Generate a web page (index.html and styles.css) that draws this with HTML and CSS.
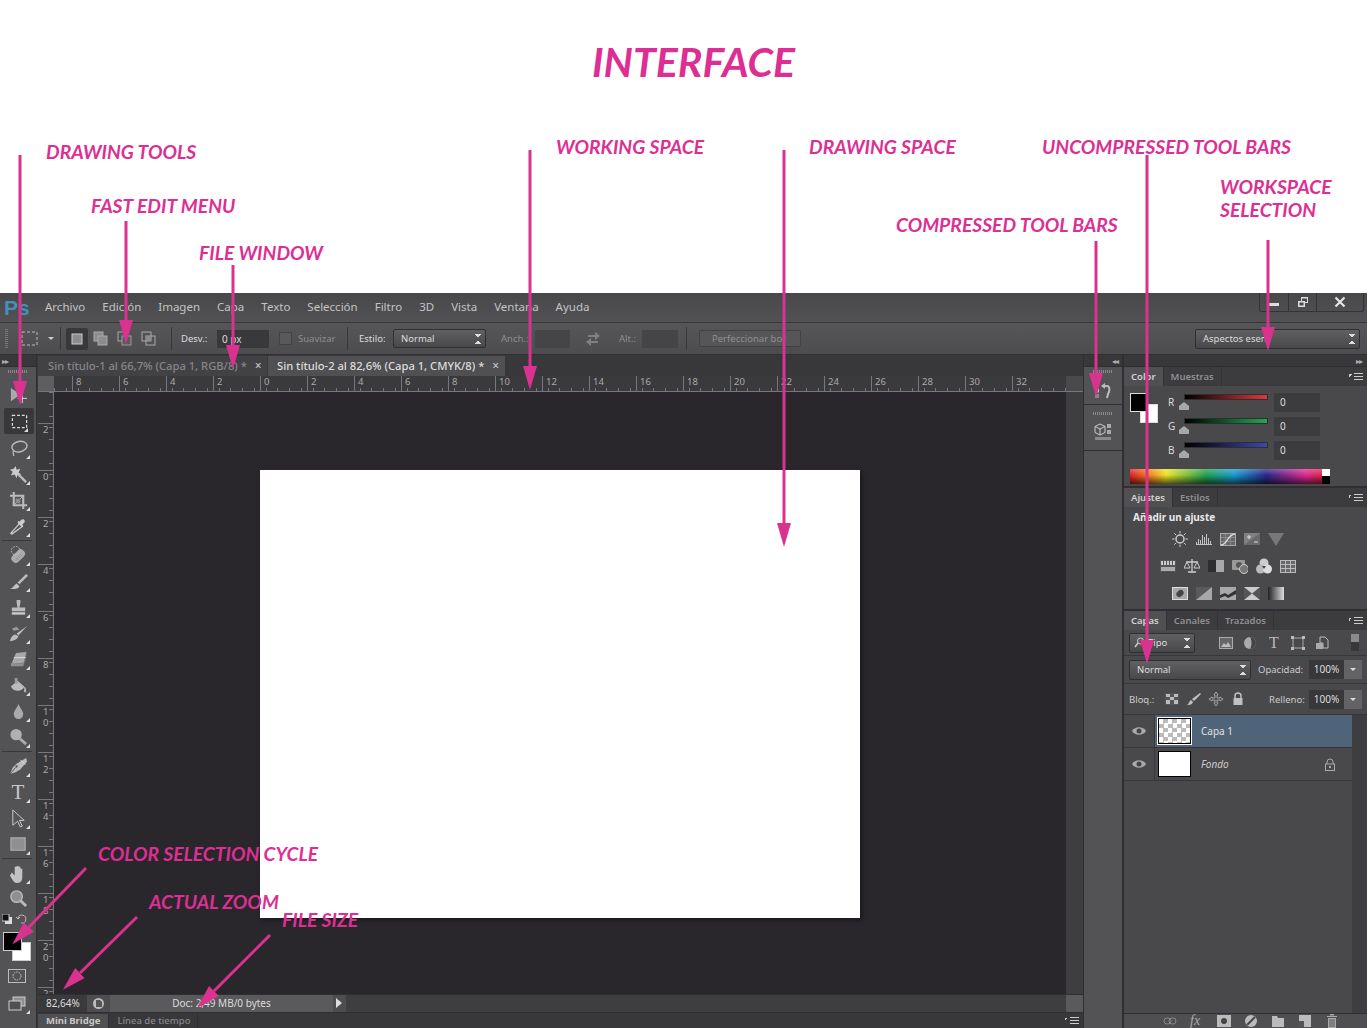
FILE: index.html
```html
<!DOCTYPE html>
<html lang="es">
<head>
  <meta charset="UTF-8">
  <title>Interface</title>
  <link rel="stylesheet" href="styles.css">
</head>
<body>

  <header class="intro">
    <h1>INTERFACE</h1>
  </header>

  <div class="ps">
    <!-- barra de menu -->
    <div class="menubar">
      <span class="logo">Ps</span>
      <nav class="menu">
        <span>Archivo</span><span>Edición</span><span>Imagen</span><span>Capa</span><span>Texto</span><span>Selección</span><span>Filtro</span><span>3D</span><span>Vista</span><span>Ventana</span><span>Ayuda</span>
      </nav>
      <div class="winctl">
        <span class="winbtn win-min"><svg width="12" height="12" viewBox="0 0 12 12"><rect x="1" y="7" width="10" height="3" fill="#ddd"/></svg></span>
        <span class="winbtn win-max"><svg width="12" height="12" viewBox="0 0 12 12"><path d="M4 1h7v6H8v4H1V5h3zM5 2.500V5h3v1h2V2.500zM2.500 6.500v3h4v-3z" fill="#ddd"/></svg></span>
        <span class="winbtn win-close"><svg width="12" height="12" viewBox="0 0 12 12"><path d="M1.500 1.500l9 9M10.500 1.500l-9 9" stroke="#e4e4e4" stroke-width="2.200"/></svg></span>
      </div>
    </div>

    <!-- barra de opciones -->
    <div class="options">
      <span class="grip-v"></span>
      <svg class="opt-marquee" width="17" height="15" viewBox="0 0 17 15"><rect x="1" y="1" width="15" height="13" fill="none" stroke="#bbb" stroke-dasharray="3 2"/></svg>
      <span class="caret"></span>
      <span class="sep sep-a"></span>
      <span class="modebtn active"><svg width="14" height="14" viewBox="0 0 14 14"><rect x="2" y="2" width="10" height="10" fill="#8c8b8e" stroke="#ccc"/></svg></span>
      <span class="modebtn"><svg width="16" height="16" viewBox="0 0 16 16"><rect x="1" y="1" width="9" height="9" fill="#8c8b8e" stroke="#aaa"/><rect x="5" y="5" width="9" height="9" fill="#8c8b8e" stroke="#aaa"/></svg></span>
      <span class="modebtn"><svg width="16" height="16" viewBox="0 0 16 16"><rect x="1" y="1" width="9" height="9" fill="none" stroke="#aaa"/><rect x="5" y="5" width="9" height="9" fill="#5a595c" stroke="#999"/></svg></span>
      <span class="modebtn"><svg width="16" height="16" viewBox="0 0 16 16"><rect x="1" y="1" width="9" height="9" fill="none" stroke="#aaa"/><rect x="5" y="5" width="9" height="9" fill="none" stroke="#aaa"/><rect x="5" y="5" width="5" height="5" fill="#8c8b8e"/></svg></span>
      <span class="sep sep-b"></span>
      <label class="opt-label desv">Desv.:</label>
      <span class="field field-desv">0 px</span>
      <span class="check"></span>
      <span class="opt-label dim suavizar">Suavizar</span>
      <span class="sep sep-c"></span>
      <span class="opt-label estilo">Estilo:</span>
      <span class="select select-estilo">Normal<i class="updown"></i></span>
      <span class="opt-label dim anch">Anch.:</span>
      <span class="field field-small"></span>
      <svg class="swap" width="16" height="14" viewBox="0 0 16 14"><path d="M3 3h7V0l5 4-5 4V5H3zM13 9H6V6l-5 4 5 4v-3h7z" fill="#807f82"/></svg>
      <span class="opt-label dim alt">Alt.:</span>
      <span class="field field-small field-alt"></span>
      <span class="sep sep-d"></span>
      <span class="refine">Perfeccionar bor</span>
      <span class="select select-workspace">Aspectos esen<i class="updown"></i></span>
    </div>

    <div class="main">
      <!-- herramientas -->
      <aside class="tools">
        <div class="strip"><span class="dbl">▸▸</span></div>
        <div class="grip-h tool-grip"></div>
        <div class="tool"><svg viewBox="0 0 20 20"><path d="M2 2l10 7-10 7z" fill="#aaa"/><path d="M14 8v10M9 13h10" stroke="#ddd"/></svg></div>
        <div class="tool selected more"><svg viewBox="0 0 20 20"><rect x="2.500" y="3.500" width="15" height="13" fill="none" stroke="#ddd" stroke-width="1.300" stroke-dasharray="3 2"/></svg></div>
        <div class="tool more"><svg viewBox="0 0 20 20"><ellipse cx="11" cy="8" rx="8" ry="5.500" fill="none" stroke="#bbb" stroke-width="1.500" transform="rotate(-12 11 8)"/><path d="M5 12c-2 2 0 3 0 6" fill="none" stroke="#bbb" stroke-width="1.300"/></svg></div>
        <div class="tool more"><svg viewBox="0 0 20 20"><path d="M9 9l9 9" stroke="#bbb" stroke-width="2.500"/><path d="M7 1l1 4 4-1-2 4 3 2-4 0-1 4-2-4-4 1 2-4-3-2 4-1z" fill="#ccc"/></svg></div>
        <div class="tool more"><svg viewBox="0 0 20 20"><path d="M5 1v14h14M1 5h14v14" fill="none" stroke="#bbb" stroke-width="2.200"/><path d="M5 15L15 5" stroke="#bbb"/><rect x="7" y="8" width="5" height="5" fill="#8c8b8e"/></svg></div>
        <div class="tool more"><svg viewBox="0 0 20 20"><path d="M3 18l-1-1 9-10 3 3z" fill="none" stroke="#ccc" stroke-width="1.400"/><path d="M11 5l2-2c2-2 5 1 3 3l-2 2 1 1-2 1-4-4 1-2z" fill="#ccc"/></svg></div>
        <div class="tool gap-top more"><svg viewBox="0 0 20 20"><rect x="5" y="3" width="9" height="16" rx="4" fill="#aaa" transform="rotate(45 10 11)"/><circle cx="7" cy="5" r="4.500" fill="none" stroke="#ccc" stroke-dasharray="1.500 1.500"/><path d="M8 13l1 1M10 11l1 1M12 9l1 1" stroke="#666"/></svg></div>
        <div class="tool more"><svg viewBox="0 0 20 20"><path d="M18 2l2 2-9 9-2-2z" fill="#bbb"/><path d="M8 12l3 3c-1 3-6 3-10 3 3-1 4-4 7-6z" fill="#c4c4c4"/></svg></div>
        <div class="tool more"><svg viewBox="0 0 20 20"><path d="M8 2h4v3l-1 5h6v4H3v-4h6L8 5z" fill="#bbb"/><rect x="3" y="15" width="14" height="2.500" fill="#ccc"/></svg></div>
        <div class="tool more"><svg viewBox="0 0 20 20"><path d="M19 2L8 10l2 2zM1 18c1-4 3-7 6-7l3 2c-1 3-5 5-9 5z" fill="#bbb"/><path d="M3 5l5-2 3 3-6 1z" fill="#999"/></svg></div>
        <div class="tool more"><svg viewBox="0 0 20 20"><path d="M8 3h11l-4 11H2z" transform="rotate(-6 10 9)" fill="#a8a8a8"/><path d="M5 8h13" stroke="#ddd"/><path d="M2 14h13l4-11-1 4-3 10H2z" fill="#8e8e8e"/></svg></div>
        <div class="tool more"><svg viewBox="0 0 20 20"><path d="M2 11l7-6 7 6c-1 5-11 7-14 0z" fill="#bbb"/><path d="M6 2h3v6H6z" fill="#999"/><path d="M16 11c2 1 2 4 2 6h-2z" fill="#bbb"/></svg></div>
        <div class="tool more"><svg viewBox="0 0 20 20"><path d="M10 2c2 5 5 7 5 11a5 5 0 0 1-10 0c0-4 3-6 5-11z" fill="#aaa"/></svg></div>
        <div class="tool more"><svg viewBox="0 0 20 20"><circle cx="7.500" cy="7" r="6" fill="#b0b0b0"/><path d="M11 11l7 6" stroke="#aaa" stroke-width="3"/></svg></div>
        <div class="tool gap-top more"><svg viewBox="0 0 20 20"><path d="M18 1l1 4-7 8-5 3-6 2 3-7 4-4z" fill="#bbb"/><path d="M1 18l6-7" stroke="#555"/><circle cx="8" cy="10" r="1.200" fill="#555"/><path d="M12 3l5 5" stroke="#ddd"/></svg></div>
        <div class="tool more"><span class="type-t">T</span></div>
        <div class="tool more"><svg viewBox="0 0 20 20"><path d="M4 1l12 11h-5l3 6-2 1-3-6-5 4z" fill="#555" stroke="#ccc"/></svg></div>
        <div class="tool more"><svg viewBox="0 0 20 20"><rect x="2" y="3" width="15" height="13" fill="#8f8e91" stroke="#bbb"/></svg></div>
        <div class="tool gap-top more"><svg viewBox="0 0 20 20"><path d="M3 9l3 3V3h2v6-7h2v7-6h2v7-5h2v9c0 4-2 6-5 6-4 0-5-3-8-8z" fill="#c2c2c2"/></svg></div>
        <div class="tool tool-zoom"><svg viewBox="0 0 20 20"><circle cx="8" cy="8" r="6" fill="#8f8e91" stroke="#bbb" stroke-width="1.500"/><path d="M12 12l6 6" stroke="#bbb" stroke-width="3"/></svg></div>
        <div class="mini-colors">
          <svg width="11" height="11" viewBox="0 0 11 11"><rect x="3" y="3" width="7" height="7" fill="#ddd"/><rect x="0" y="0" width="7" height="7" fill="#111" stroke="#ccc"/></svg>
          <svg width="11" height="11" viewBox="0 0 11 11"><path d="M2 4a4 4 0 1 1 3 5M0 3l2 2 2-2" fill="none" stroke="#bbb"/></svg>
        </div>
        <div class="swatches">
          <span class="bg"></span>
          <span class="fg"></span>
        </div>
        <div class="tool-quick"><svg width="18" height="14" viewBox="0 0 18 14"><rect x=".5" y=".5" width="17" height="13" fill="none" stroke="#bbb"/><circle cx="9" cy="7" r="4" fill="none" stroke="#ccc" stroke-dasharray="1.500 1"/></svg></div>
        <div class="tool-screen more"><svg width="18" height="16" viewBox="0 0 18 16"><rect x="5" y="1" width="12" height="9" fill="#8f8e91" stroke="#ccc"/><rect x="1" y="5" width="12" height="9" fill="#4f4e51" stroke="#ccc"/></svg></div>
      </aside>

      <!-- documento -->
      <section class="doc">
        <div class="tabs">
          <span class="tab">Sin título-1 al 66,7% (Capa 1, RGB/8) *<b>×</b></span>
          <span class="tab on">Sin título-2 al 82,6% (Capa 1, CMYK/8) *<b>×</b></span>
        </div>
        <div class="ruler-top">
          <span class="corner"></span>
          <div class="hticks">
            <span>8</span><span>6</span><span>4</span><span>2</span><span>0</span><span>2</span><span>4</span><span>6</span><span>8</span><span>10</span><span>12</span><span>14</span><span>16</span><span>18</span><span>20</span><span>22</span><span>24</span><span>26</span><span>28</span><span>30</span><span>32</span>
          </div>
          <span class="scroll-cap"></span>
        </div>
        <div class="doc-body">
          <div class="vticks">
            <span>2</span><span>0</span><span>2</span><span>4</span><span>6</span><span>8</span><span>1<br>0</span><span>1<br>2</span><span>1<br>4</span><span>1<br>6</span><span>1<br>8</span><span>2<br>0</span><span>2</span>
          </div>
          <div class="canvas"><div class="page"></div></div>
          <div class="vscroll"></div>
        </div>
        <div class="status">
          <span class="zoomval">82,64%</span>
          <span class="status-ico"><svg width="13" height="13" viewBox="0 0 13 13"><circle cx="6.500" cy="6.500" r="5.500" fill="#bbb"/><path d="M4 3h4l2 2v5H4z" fill="#555"/></svg></span>
          <span class="docinfo">Doc: 2,49 MB/0 bytes</span>
          <span class="status-next"></span>
          <span class="hscroll"></span>
          <span class="scroll-corner"></span>
        </div>
        <div class="bottom-tabs">
          <span class="btab on">Mini Bridge</span>
          <span class="btab">Línea de tiempo</span>
          <span class="panel-menu"></span>
        </div>
      </section>

      <!-- paneles contraidos -->
      <aside class="dock">
        <div class="strip strip-right"><span class="dbl">◂◂</span></div>
        <div class="dock-group">
          <div class="grip-h"></div>
          <svg width="18" height="18" viewBox="0 0 18 18"><rect x="1" y="1" width="4" height="4" fill="#aaa"/><rect x="1.500" y="7" width="3" height="3" fill="none" stroke="#bbb"/><rect x="1" y="12" width="4" height="4" fill="#888"/><path d="M8 4h5c3 0 3 5 1 8l-1 4" fill="none" stroke="#bbb" stroke-width="2"/><path d="M7 4l4-3v6z" fill="#bbb"/></svg>
        </div>
        <div class="dock-group">
          <div class="grip-h"></div>
          <svg width="18" height="18" viewBox="0 0 18 18"><path d="M6 1l5 2.500v6L6 12 1 9.500v-6z" fill="none" stroke="#ccc"/><path d="M1 3.500L6 6l5-2.500M6 6v6" stroke="#ccc" fill="none"/><rect x="13" y="1" width="4" height="4" fill="#aaa"/><rect x="13" y="7" width="4" height="4" fill="#aaa"/><rect x="1" y="14" width="16" height="3" fill="#8a898c"/></svg>
        </div>
      </aside>

      <!-- paneles -->
      <aside class="panels">
        <div class="strip strip-end"><span class="dbl">▸▸</span></div>

        <section class="panel panel-color">
          <div class="ptabs"><span class="ptab on">Color</span><span class="ptab">Muestras</span><span class="panel-menu"></span></div>
          <div class="color-body">
            <div class="color-main">
              <div class="pswatches"><span class="pbg"></span><span class="pfg"></span></div>
              <div class="sliders">
                <div class="slider"><span class="letter">R</span><span class="track"><i class="bar bar-r"></i><i class="thumb"></i></span><span class="value">0</span></div>
                <div class="slider"><span class="letter">G</span><span class="track"><i class="bar bar-g"></i><i class="thumb"></i></span><span class="value">0</span></div>
                <div class="slider"><span class="letter">B</span><span class="track"><i class="bar bar-b"></i><i class="thumb"></i></span><span class="value">0</span></div>
              </div>
            </div>
            <div class="spectrum"><span class="spec-ends"></span></div>
          </div>
        </section>

        <section class="panel panel-adjust">
          <div class="ptabs"><span class="ptab on">Ajustes</span><span class="ptab">Estilos</span><span class="panel-menu"></span></div>
          <div class="adjust-title">Añadir un ajuste</div>
          <div class="adj-row">
            <svg viewBox="0 0 16 16"><circle cx="8" cy="8" r="4" fill="none" stroke="#ccc" stroke-width="1.500"/><path d="M8 0v2.500M8 13.500V16M0 8h2.500M13.500 8H16M2.300 2.300l1.800 1.800M11.900 11.900l1.800 1.800M2.300 13.700l1.800-1.800M11.900 4.100l1.800-1.800" stroke="#ccc"/></svg>
            <svg viewBox="0 0 16 16"><path d="M.5 14v-3M2.500 14V8M4.500 14V9M6.500 14V4M8.500 14V6M10.500 14V3M12.500 14V7M14.500 14v-4M0 13.500h16" stroke="#c4c4c4" fill="none"/></svg>
            <svg viewBox="0 0 16 16"><rect x=".5" y="2.500" width="15" height="12" fill="#68676a" stroke="#aaa"/><path d="M5.500 3v11M10.500 3v11M1 6.500h14M1 10.500h14" stroke="#888"/><path d="M1 14c6 0 7-11 14-11" fill="none" stroke="#ddd" stroke-width="1.300"/></svg>
            <svg viewBox="0 0 16 16"><rect y="2" width="16" height="12" fill="#807f82"/><path d="M0 14L16 2v12z" fill="#69686b"/><path d="M3 6h4M5 4v4M10 11h4" stroke="#ddd"/></svg>
            <svg viewBox="0 0 16 16"><path d="M0 2h16L8 15z" fill="#78777a"/></svg>
          </div>
          <div class="adj-row">
            <svg viewBox="0 0 16 16"><rect y="2" width="16" height="12" fill="#555"/><path d="M1 3h2v4H1zM4 3h2v4H4zM7 3h2v4H7zM10 3h2v4h-2zM13 3h2v4h-2z" fill="#ccc"/><rect x="1" y="9" width="14" height="4" fill="#aaa"/></svg>
            <svg viewBox="0 0 16 16"><path d="M8 1v13M4 14h8M2 4h12" stroke="#ccc" stroke-width="1.300"/><path d="M0 10h6l-3-6zM10 10h6l-3-6z" fill="none" stroke="#ccc"/></svg>
            <svg viewBox="0 0 16 16"><rect y="2" width="8" height="12" fill="#2e2d30"/><rect x="8" y="2" width="8" height="12" fill="#a8a8a8"/></svg>
            <svg viewBox="0 0 16 16"><rect y="2" width="13" height="10" rx="1" fill="#999"/><circle cx="7" cy="7" r="3" fill="#555"/><circle cx="12" cy="11" r="4.500" fill="#777" stroke="#ccc"/></svg>
            <svg viewBox="0 0 16 16"><circle cx="8" cy="5" r="4.500" fill="#ccc"/><circle cx="4.500" cy="11" r="4.500" fill="#bbb"/><circle cx="11.500" cy="11" r="4.500" fill="#ddd"/><path d="M6 8h4l-2 3z" fill="#444"/></svg>
            <svg viewBox="0 0 16 16"><rect x=".5" y="2.500" width="15" height="12" fill="#68676a" stroke="#bbb"/><path d="M5.500 3v11M10.500 3v11M1 6.500h14M1 10.500h14" stroke="#bbb"/></svg>
          </div>
          <div class="adj-row">
            <svg viewBox="0 0 16 16"><rect x=".5" y="2.500" width="15" height="12" fill="#a8a8a8" stroke="#ddd"/><ellipse cx="8" cy="8.500" rx="4" ry="3" fill="#444" transform="rotate(-40 8 8.500)"/></svg>
            <svg viewBox="0 0 16 16"><rect y="2" width="16" height="13" fill="#5a595c"/><path d="M0 15L16 2v13z" fill="#a8a8a8"/></svg>
            <svg viewBox="0 0 16 16"><rect y="2" width="16" height="13" fill="#a8a8a8"/><path d="M0 10l5-2 3 2 8-5v4l-8 4-3-2-5 2z" fill="#333"/></svg>
            <svg viewBox="0 0 16 16"><rect y="2" width="16" height="13" fill="#ccc"/><path d="M0 2l8 6.500L0 15zM16 2L8 8.500 16 15z" fill="#555"/></svg>
            <svg viewBox="0 0 16 16"><defs><linearGradient id="gradmap"><stop offset="0" stop-color="#222"/><stop offset="1" stop-color="#ddd"/></linearGradient></defs><rect y="2" width="16" height="13" fill="url(#gradmap)"/></svg>
          </div>
        </section>

        <section class="panel panel-layers">
          <div class="ptabs"><span class="ptab on">Capas</span><span class="ptab">Canales</span><span class="ptab">Trazados</span><span class="panel-menu"></span></div>
          <div class="lrow lrow-filter">
            <span class="select select-kind"><svg width="11" height="11" viewBox="0 0 11 11"><circle cx="6.500" cy="4" r="3" fill="none" stroke="#ccc"/><path d="M4 6l-3 4" stroke="#ccc" stroke-width="1.500"/></svg>Tipo<i class="updown"></i></span>
            <div class="filters">
              <svg viewBox="0 0 14 14"><rect x=".5" y="1.500" width="13" height="11" fill="#666" stroke="#aaa"/><path d="M2 11l3-4 2 2 2-3 3 5z" fill="#bbb"/></svg>
              <svg viewBox="0 0 14 14"><circle cx="7" cy="7" r="6" fill="#aaa"/><path d="M7 1a6 6 0 0 1 0 12c2-3 2-9 0-12z" fill="#444"/></svg>
              <span class="filter-t">T</span>
              <svg viewBox="0 0 14 14"><rect x="2" y="2" width="10" height="10" fill="none" stroke="#aaa"/><path d="M0 0h3v3H0zM11 0h3v3h-3zM0 11h3v3H0zM11 11h3v3h-3z" fill="#bbb"/></svg>
              <svg viewBox="0 0 14 14"><path d="M5 1h5l3 3v8H8V7H5z" fill="none" stroke="#bbb"/><rect x="1" y="7" width="7" height="6" fill="#aaa"/></svg>
            </div>
            <span class="filter-toggle"></span>
          </div>
          <div class="lrow lrow-blend">
            <span class="select select-blend">Normal<i class="updown"></i></span>
            <span class="lab">Opacidad:</span>
            <span class="pct">100%</span><span class="pct-btn"></span>
          </div>
          <div class="lrow lrow-lock">
            <span class="lab lab-bloq">Bloq.:</span>
            <span class="locks">
              <svg viewBox="0 0 14 14"><path d="M0 1h14v12H0z" fill="#555"/><path d="M1 2h4v3H1zM9 2h4v3H9zM5 5h4v3H5zM1 8h4v4H1zM9 8h4v4H9z" fill="#bbb"/></svg>
              <svg viewBox="0 0 14 14"><path d="M13 1l1 1-7 7-2-2zM4 8l2 2c-1 3-4 3-6 3 2-1 2-4 4-5z" fill="#c0c0c0"/></svg>
              <svg viewBox="0 0 14 14"><path d="M7 0l2 3H8v3h3V5l3 2-3 2V8H8v3h1l-2 3-2-3h1V8H3v1L0 7l3-2v1h3V3H5z" fill="none" stroke="#bbb" stroke-width=".8"/></svg>
              <svg viewBox="0 0 14 14"><path d="M4 6V4a3 3 0 0 1 6 0v2" fill="none" stroke="#c0c0c0" stroke-width="1.500"/><rect x="2.500" y="6" width="9" height="7" fill="#c0c0c0"/></svg>
            </span>
            <span class="lab lab-fill">Relleno:</span>
            <span class="pct">100%</span><span class="pct-btn"></span>
          </div>
          <div class="layers">
            <div class="layer-list">
              <div class="layer on">
                <span class="eye"><svg width="14" height="10" viewBox="0 0 14 10"><path d="M0 5c3-5 11-5 14 0-3 5-11 5-14 0z" fill="#aaa"/><circle cx="7" cy="5" r="2.500" fill="#444"/></svg></span>
                <span class="thumbnail checker"></span>
                <span class="lname">Capa 1</span>
              </div>
              <div class="layer">
                <span class="eye"><svg width="14" height="10" viewBox="0 0 14 10"><path d="M0 5c3-5 11-5 14 0-3 5-11 5-14 0z" fill="#aaa"/><circle cx="7" cy="5" r="2.500" fill="#444"/></svg></span>
                <span class="thumbnail white"></span>
                <span class="lname fondo">Fondo</span>
                <svg class="layer-lock" width="12" height="13" viewBox="0 0 12 13"><path d="M3 6V4a3 3 0 0 1 6 0v2" fill="none" stroke="#aaa"/><rect x="1.500" y="6" width="9" height="6.500" fill="none" stroke="#aaa"/><rect x="5" y="8" width="2" height="2" fill="#aaa"/></svg>
              </div>
            </div>
            <div class="layers-scroll"></div>
          </div>
          <div class="layers-foot">
            <svg viewBox="0 0 14 14"><rect x="1" y="4" width="7" height="6" rx="3" fill="none" stroke="#888"/><rect x="6" y="4" width="7" height="6" rx="3" fill="none" stroke="#888"/></svg>
            <span class="fx">fx</span>
            <svg viewBox="0 0 14 14"><rect y="1" width="14" height="12" fill="#bbb"/><circle cx="7" cy="7" r="3" fill="#444"/></svg>
            <svg viewBox="0 0 14 14"><circle cx="7" cy="7" r="6" fill="#bbb"/><path d="M3 11L11 3" stroke="#444" stroke-width="2"/></svg>
            <svg viewBox="0 0 14 14"><path d="M1 2h5l1 2h6v9H1z" fill="#bbb"/></svg>
            <svg viewBox="0 0 14 14"><path d="M1 1h12v12H1z" fill="#bbb"/><path d="M1 7h5v6H1z" fill="#555"/></svg>
            <svg viewBox="0 0 14 14"><path d="M3 4h8v10H3zM2 2h10v1H2zM5 0h4v1.500H5z" fill="#aaa"/><path d="M5 5v8M7 5v8M9 5v8" stroke="#555"/></svg>
          </div>
        </section>
      </aside>
    </div>
  </div>

  <!-- anotaciones -->
  <svg class="arrows" width="1370" height="1028" viewBox="0 0 1370 1028">
    <defs>
      <marker id="head" markerUnits="userSpaceOnUse" markerWidth="26" markerHeight="16" refX="0" refY="8" orient="auto">
        <path d="M0 1l24 7-24 7z" fill="#d9328f"/>
      </marker>
    </defs>
    <g stroke="#d9328f" stroke-width="3">
      <line x1="20" y1="155" x2="20" y2="381" marker-end="url(#head)"/>
      <line x1="126" y1="221" x2="126" y2="320" marker-end="url(#head)"/>
      <line x1="233" y1="265" x2="233" y2="345" marker-end="url(#head)"/>
      <line x1="530" y1="150" x2="530" y2="366" marker-end="url(#head)"/>
      <line x1="784" y1="150" x2="784" y2="523" marker-end="url(#head)"/>
      <line x1="1096" y1="241" x2="1096" y2="373" marker-end="url(#head)"/>
      <line x1="1147" y1="155" x2="1147" y2="640" marker-end="url(#head)"/>
      <line x1="1268" y1="240" x2="1268" y2="327" marker-end="url(#head)"/>
      <line x1="86" y1="868" x2="29" y2="927" marker-end="url(#head)"/>
      <line x1="137" y1="917" x2="80" y2="973" marker-end="url(#head)"/>
      <line x1="270" y1="935" x2="214" y2="991" marker-end="url(#head)"/>
    </g>
  </svg>
  <span class="note n-drawing">DRAWING TOOLS</span>
  <span class="note n-fast">FAST EDIT MENU</span>
  <span class="note n-file">FILE WINDOW</span>
  <span class="note n-working">WORKING SPACE</span>
  <span class="note n-space">DRAWING SPACE</span>
  <span class="note n-uncompressed">UNCOMPRESSED TOOL BARS</span>
  <span class="note n-workspace">WORKSPACE<br>SELECTION</span>
  <span class="note n-compressed">COMPRESSED TOOL BARS</span>
  <span class="note n-cycle">COLOR SELECTION CYCLE</span>
  <span class="note n-zoom">ACTUAL ZOOM</span>
  <span class="note n-size">FILE SIZE</span>

</body>
</html>
```

FILE: styles.css
```css
* {
  box-sizing: border-box;
}

html, body {
  margin: 0;
  padding: 0;
}

body {
  position: relative;
  width: 1370px;
  height: 1028px;
  overflow: hidden;
  background-color: #fff;
  font-family: "Noto Sans", "Liberation Sans", sans-serif;
  font-size: 10px;
  color: #c8c8c8;
}

.intro {
  height: 293px;
  padding-top: 37px;
  padding-left: 17px;
  text-align: center;
}

h1 {
  margin: 0;
  font-family: Lato, sans-serif;
  font-style: italic;
  font-weight: 700;
  font-size: 41px;
  line-height: 50px;
  color: #dd2f93;
}

/* anotaciones */
.arrows {
  position: absolute;
  left: 0;
  top: 0;
  pointer-events: none;
}

.note {
  position: absolute;
  font-family: Lato, sans-serif;
  font-style: italic;
  font-weight: 700;
  font-size: 19.300px;
  line-height: 23px;
  color: #dd2f93;
  white-space: nowrap;
}

.n-drawing { left: 46px; top: 140px; }
.n-fast { left: 91px; top: 194px; }
.n-file { left: 199px; top: 241px; }
.n-working { left: 556px; top: 135px; }
.n-space { left: 809px; top: 135px; }
.n-uncompressed { left: 1042px; top: 135px; }
.n-workspace { left: 1220px; top: 175px; }
.n-compressed { left: 896px; top: 213px; }
.n-cycle { left: 98px; top: 842px; }
.n-zoom { left: 149px; top: 890px; }
.n-size { left: 282px; top: 908px; }

/* ventana */
.ps {
  width: 1367px;
  height: 735px;
  display: flex;
  flex-direction: column;
  background-color: #4a494c;
}

.menubar {
  height: 30px;
  flex: none;
  display: flex;
  background: linear-gradient(#48474a, #525154);
  border-bottom: 1px solid #37363a;
}

.logo {
  width: 45px;
  padding: 2px 0 0 4px;
  font-family: "Liberation Sans", sans-serif;
  font-weight: 700;
  font-size: 21px;
  line-height: 26px;
  color: #4490bc;
}

.menu {
  display: flex;
  gap: 17px;
  align-items: center;
  padding-bottom: 2px;
  font-size: 11.500px;
  color: #c4c4c4;
}

.winctl {
  margin-left: auto;
  margin-right: 3px;
  height: 19px;
  display: flex;
  border: 1px solid #333236;
  border-top: 0;
  border-radius: 0 0 3px 3px;
}

.winbtn {
  display: flex;
  align-items: center;
  justify-content: center;
  border-left: 1px solid #333236;
}

.win-min { width: 28px; border-left: 0; }
.win-max { width: 28px; }
.win-close { width: 47px; }

.options {
  height: 32px;
  flex: none;
  display: flex;
  align-items: center;
  background: linear-gradient(#565558, #4d4c4f);
  border-bottom: 1px solid #2f2e32;
  font-size: 9.500px;
}

.grip-v {
  width: 3px;
  height: 20px;
  margin-left: 5px;
  background: repeating-linear-gradient(#77767a 0 1px, transparent 1px 2px);
}

.opt-marquee { margin-left: 13px; }

.caret {
  width: 0;
  height: 0;
  margin-left: 10px;
  border: 3px solid transparent;
  border-top: 3px solid #ccc;
  border-bottom: 0;
}

.sep {
  width: 1px;
  height: 23px;
  background-color: #38373b;
}

.sep-a { margin: 0 5px 0 6px; }
.sep-b { margin: 0 9px 0 10px; }
.sep-c { margin: 0 11px 0 12px; }
.sep-d { margin: 0 12px 0 8px; }

.modebtn {
  width: 24px;
  height: 22px;
  display: flex;
  align-items: center;
  justify-content: center;
}

.modebtn.active {
  width: 22px;
  margin-right: 1px;
  background-color: #38373a;
  border-radius: 2px;
}

.opt-label {
  color: #ddd;
  white-space: nowrap;
}

.opt-label.dim { color: #8f8e91; }

.desv { width: 36px; }

.field {
  height: 18px;
  display: flex;
  align-items: center;
  padding-left: 5px;
  background-color: #39383b;
  font-size: 10px;
  color: #ddd;
}

.field-desv { width: 52px; }

.field-small {
  width: 35px;
  background-color: #454447;
}

.field-alt { width: 36px; }

.check {
  width: 13px;
  height: 13px;
  margin: 0 6px 0 10px;
  background-color: #59585b;
  border: 1px solid #424145;
}

.suavizar { width: 37px; }
.estilo { width: 34px; }

.select {
  position: relative;
  height: 19px;
  display: flex;
  align-items: center;
  gap: 3px;
  padding-left: 7px;
  background: linear-gradient(#605f62, #484749);
  border: 1px solid #2f2e31;
  border-radius: 2px;
  font-size: 9.500px;
  color: #ddd;
  white-space: nowrap;
  overflow: hidden;
}

.updown {
  position: absolute;
  right: 4px;
  top: 4px;
  width: 6px;
  height: 10px;
  background:
    linear-gradient(45deg, transparent 50%, #ddd 50%) 0 0 / 3px 4px no-repeat,
    linear-gradient(-45deg, transparent 50%, #ddd 50%) 3px 0 / 3px 4px no-repeat,
    linear-gradient(135deg, transparent 50%, #ddd 50%) 0 6px / 3px 4px no-repeat,
    linear-gradient(-135deg, transparent 50%, #ddd 50%) 3px 6px / 3px 4px no-repeat;
}

.select-estilo { width: 93px; }
.anch { width: 34px; margin-left: 15px; }
.swap { margin: 0 18px 0 15px; }
.alt { width: 23px; }

.refine {
  width: 102px;
  height: 17px;
  display: flex;
  align-items: center;
  padding-left: 12px;
  background-color: #565558;
  border: 1px solid #424145;
  border-radius: 2px;
  color: #8f8e91;
  white-space: nowrap;
  overflow: hidden;
}

.select-workspace {
  width: 165px;
  height: 20px;
  margin-left: auto;
  margin-right: 7px;
}

.main {
  flex: 1;
  min-height: 0;
  display: flex;
  overflow: hidden;
}

.strip {
  height: 12px;
  flex: none;
  display: flex;
  align-items: center;
  background-color: #38373a;
  font-size: 8px;
  color: #b0b0b0;
  border-bottom: 1px solid #2e2d31;
}

.dbl {
  padding-left: 2px;
  letter-spacing: -1px;
}

.strip-right { justify-content: flex-end; padding-right: 4px; }
.strip-end { justify-content: flex-end; padding-right: 5px; }

/* herramientas */
.tools {
  width: 37px;
  flex: none;
  background-color: #535255;
  border-right: 1px solid #2f2e32;
}

.grip-h {
  height: 3px;
  width: 20px;
  margin: 0 auto;
  background: repeating-linear-gradient(90deg, #8a898c 0 1px, transparent 1px 2px);
}

.tool-grip { margin-top: 3px; margin-bottom: 9px; }

.tool {
  position: relative;
  width: 36px;
  height: 26px;
  display: flex;
  align-items: center;
  justify-content: center;
}

.tool svg {
  width: 19px;
  height: 19px;
}

.tool.selected {
  width: 30px;
  margin-left: 4px;
  margin-bottom: 1px;
  background-color: #38373a;
  border-radius: 2px;
}

.tool.gap-top {
  margin-top: 3px;
}

.tool.gap-top::before {
  content: "";
  position: absolute;
  left: 2px;
  right: 4px;
  top: -2px;
  height: 1px;
  background-color: #38373a;
}

.more::after {
  content: "";
  position: absolute;
  right: 6px;
  bottom: 2px;
  border: 2px solid transparent;
  border-right-color: #ddd;
  border-bottom-color: #ddd;
}

.type-t {
  font-family: "Liberation Serif", serif;
  font-size: 21px;
  line-height: 1;
  color: #c8c8c8;
}

.tool-zoom { height: 24px; }

.mini-colors {
  height: 12px;
  margin-top: 4px;
  padding: 0 9px 0 2px;
  display: flex;
  justify-content: space-between;
}

.swatches {
  position: relative;
  height: 33px;
  margin-top: 5px;
}

.swatches span {
  position: absolute;
  width: 19px;
  height: 19px;
  border: 1px solid #ccc;
}

.swatches .bg { left: 12px; top: 11px; background-color: #fff; }
.swatches .fg { left: 3px; top: 1px; background-color: #000; }

.tool-quick {
  height: 20px;
  display: flex;
  justify-content: center;
  align-items: center;
  padding-right: 2px;
  margin-top: 2px;
}

.tool-screen {
  position: relative;
  height: 24px;
  margin-top: 6px;
  display: flex;
  justify-content: center;
  align-items: center;
  padding-right: 2px;
}

/* documento */
.doc {
  width: 1046px;
  flex: none;
  min-height: 0;
  display: flex;
  flex-direction: column;
  background-color: #38373a;
}

.tabs {
  height: 21px;
  flex: none;
  padding: 1px 0 0 1px;
  display: flex;
  gap: 1px;
  background-color: #38373a;
}

.tab {
  width: 229px;
  height: 20px;
  padding: 0 0 2px 10px;
  display: flex;
  align-items: center;
  font-weight: 500;
  font-size: 11.200px;
  color: #87868a;
  background-color: #424144;
  white-space: nowrap;
}

.tab.on {
  width: 237px;
  padding-left: 9px;
  color: #ddd;
  background-color: #504f52;
}

.tab b {
  margin-left: 8px;
  font-size: 12px;
  font-weight: 400;
  color: #ccc;
}

.ruler-top {
  height: 16px;
  flex: none;
  display: flex;
  margin-left: 1px;
  background-color: #3a393c;
  border-bottom: 1px solid #77767a;
}

.corner {
  width: 16px;
  flex: none;
  background-color: #5e5d60;
}

.hticks {
  flex: 1;
  display: flex;
  padding-left: 18px;
  overflow: hidden;
  background:
    repeating-linear-gradient(90deg, #77767a 0 1px, transparent 1px 11.750px) 0 100% / 100% 3px no-repeat;
}

.hticks span {
  flex: 0 0 47px;
  padding-left: 3px;
  border-left: 1px solid #77767a;
  font-size: 9.500px;
  line-height: 11px;
  color: #aaa;
}

.scroll-cap {
  width: 17px;
  flex: none;
  background-color: #4a494c;
}

.doc-body {
  flex: 1;
  min-height: 0;
  display: flex;
  margin-left: 1px;
  overflow: hidden;
}

.vticks {
  width: 16px;
  flex: none;
  padding-top: 31px;
  overflow: hidden;
  background:
    #38373a repeating-linear-gradient(#77767a 0 1px, transparent 1px 11.750px) 100% 0 / 4px 100% no-repeat;
  border-right: 1px solid #77767a;
}

.vticks span {
  display: block;
  height: 47px;
  padding-left: 5px;
  border-top: 1px solid #77767a;
  font-size: 9.500px;
  line-height: 11px;
  color: #aaa;
}

.canvas {
  flex: 1;
  min-height: 0;
  display: flex;
  align-items: center;
  justify-content: center;
  padding-top: 2px;
  background-color: #2a272c;
}

.page {
  width: 600px;
  height: 448px;
  flex: none;
  background-color: #fff;
  box-shadow: 2px 2px 4px #1a181c;
}

.vscroll {
  width: 17px;
  flex: none;
  background-color: #3e3d40;
}

.status {
  height: 19px;
  flex: none;
  margin-left: 1px;
  display: flex;
  align-items: center;
  background-color: #4d4c4f;
  border-top: 1px solid #2f2e32;
  border-bottom: 1px solid #2f2e32;
  font-size: 10px;
}

.zoomval {
  width: 49px;
  padding-left: 8px;
  color: #ddd;
  background-color: #3a393c;
  line-height: 17px;
}

.status-ico {
  width: 23px;
  height: 17px;
  display: flex;
  align-items: center;
  justify-content: center;
}

.docinfo {
  width: 223px;
  height: 17px;
  text-align: center;
  line-height: 17px;
  color: #ddd;
  background-color: #5a595c;
}

.status-next {
  position: relative;
  width: 13px;
  height: 17px;
  background-color: #4d4c4f;
}

.status-next::after {
  content: "";
  position: absolute;
  left: 3px;
  top: 3px;
  border: 5px solid transparent;
  border-left: 6px solid #ddd;
  border-right: 0;
}

.hscroll {
  flex: 1;
  height: 17px;
  background-color: #3e3d40;
}

.scroll-corner {
  width: 17px;
  height: 17px;
  background-color: #5a595c;
}

.bottom-tabs {
  height: 14px;
  flex: none;
  margin-top: 1px;
  display: flex;
  align-items: flex-start;
  background-color: #38373a;
}

.btab {
  height: 14px;
  padding: 0 6px 0 8px;
  line-height: 14px;
  font-weight: 500;
  font-size: 9.500px;
  color: #87868a;
  border-right: 1px solid #2f2e32;
}

.btab.on {
  margin-left: 1px;
  padding-right: 8px;
  font-weight: 700;
  color: #c8c8c8;
  background-color: #504f52;
}

.panel-menu {
  width: 14px;
  height: 8px;
  margin-left: auto;
  margin-right: 4px;
  align-self: center;
  background:
    linear-gradient(#ccc, #ccc) 5px 0 / 9px 1px no-repeat,
    linear-gradient(#ccc, #ccc) 5px 3px / 9px 1px no-repeat,
    linear-gradient(#ccc, #ccc) 5px 6px / 9px 1px no-repeat,
    linear-gradient(135deg, #ccc 50%, transparent 50%) 0 1px / 3px 3px no-repeat;
}

/* paneles contraidos */
.dock {
  width: 41px;
  flex: none;
  background-color: #535255;
  border-left: 1px solid #2f2e32;
  border-right: 2px solid #2f2e32;
}

.dock-group {
  height: 38px;
  padding-top: 3px;
  display: flex;
  flex-direction: column;
  align-items: center;
  gap: 9px;
  border-bottom: 1px solid #2f2e32;
}

.dock-group + .dock-group {
  height: 46px;
  padding-top: 7px;
  gap: 8px;
}

/* paneles */
.panels {
  flex: 1;
  min-width: 0;
  display: flex;
  flex-direction: column;
  background-color: #49484b;
}

.ptabs {
  height: 19px;
  display: flex;
  background-color: #3c3b3e;
  font-weight: 600;
  font-size: 9.500px;
}

.ptab {
  padding: 0 7px;
  line-height: 19px;
  color: #909093;
  border-right: 1px solid #333236;
}

.ptab.on {
  color: #d2d2d2;
  background-color: #505053;
}

.panel { border-bottom: 2px solid #2f2e32; flex: none; }

.panel-color { height: 121px; }

.color-body {
  padding: 7px 6px 0;
}

.color-main {
  display: flex;
  height: 76px;
}

.pswatches {
  position: relative;
  width: 38px;
  flex: none;
}

.pbg, .pfg {
  position: absolute;
  width: 18px;
  height: 19px;
  border: 1px solid #ddd;
}

.pbg { left: 10px; top: 11px; background-color: #fff; }
.pfg { left: 0; top: 0; background-color: #000; }

.sliders {
  display: flex;
  flex-direction: column;
  gap: 5px;
}

.slider {
  height: 19px;
  display: flex;
  font-size: 10px;
}

.letter {
  width: 16px;
  line-height: 19px;
  color: #ddd;
}

.track {
  position: relative;
  width: 90px;
}

.bar {
  position: absolute;
  left: 0;
  top: 1px;
  width: 84px;
  height: 6px;
  border: 1px solid #2f2e32;
}

.bar-r { background: linear-gradient(90deg, #000, #dd3a3a); }
.bar-g { background: linear-gradient(90deg, #000, #22aa55); }
.bar-b { background: linear-gradient(90deg, #000, #3a4aa8); }

.thumb {
  position: absolute;
  left: -5px;
  top: 9px;
  width: 10px;
  height: 8px;
  background-color: #a8a8a8;
  clip-path: polygon(50% 0, 100% 50%, 100% 100%, 0 100%, 0 50%);
}

.value {
  width: 46px;
  height: 19px;
  padding-left: 6px;
  line-height: 19px;
  color: #ddd;
  background-color: #3c3b3e;
}

.spectrum {
  position: relative;
  width: 200px;
  height: 15px;
  background:
    linear-gradient(rgba(255, 255, 255, .25), transparent 40%, rgba(0, 0, 0, .65)),
    linear-gradient(90deg, #e0222a, #f07020 8%, #ece22a 18%, #22a050 38%, #1a9ad0 52%, #2a2a88 68%, #e02a90 88%, #e0222a);
}

.spec-ends {
  position: absolute;
  right: 0;
  top: 0;
  width: 8px;
  height: 15px;
  background: linear-gradient(#fff 50%, #000 50%);
}

.panel-adjust { height: 123px; }

.adjust-title {
  padding: 3px 0 0 9px;
  line-height: 15px;
  font-weight: 700;
  font-size: 10px;
  color: #e8e8e8;
}

.adj-row {
  height: 27px;
  display: flex;
  justify-content: center;
  align-items: center;
  gap: 8px;
  padding-right: 36px;
}

.adj-row svg {
  width: 16px;
  height: 16px;
}

.panel-layers {
  flex: 1;
  min-height: 0;
  display: flex;
  flex-direction: column;
  border-bottom: 0;
}

.panel-layers .ptabs { flex: none; }

.lrow {
  flex: none;
  display: flex;
  align-items: center;
  padding-left: 5px;
  border-bottom: 1px solid #37363a;
}

.lrow-filter { height: 26px; }
.lrow-blend { height: 28px; }
.lrow-lock { height: 31px; }

.select-kind {
  width: 66px;
  height: 20px;
  padding-left: 4px;
}

.filters {
  display: flex;
  align-items: center;
  gap: 10px;
  margin-left: 24px;
}

.filters svg {
  width: 14px;
  height: 14px;
}

.filter-t {
  width: 14px;
  font-family: "Liberation Serif", serif;
  font-size: 16px;
  line-height: 14px;
  text-align: center;
  color: #bbb;
}

.filter-toggle {
  width: 8px;
  height: 17px;
  margin-left: auto;
  margin-right: 8px;
  background: linear-gradient(#8a898c 50%, #38373a 50%);
}

.select-blend {
  width: 122px;
  height: 20px;
}

.lab {
  font-size: 9.500px;
  color: #ccc;
}

.lrow-blend .lab { margin-left: 7px; width: 51px; }
.lab-bloq { width: 36px; }
.lab-fill { margin-left: 24px; width: 40px; }

.locks {
  display: flex;
  gap: 8px;
}

.locks svg {
  width: 14px;
  height: 14px;
}

.pct {
  width: 35px;
  height: 19px;
  text-align: center;
  line-height: 19px;
  color: #ddd;
  background-color: #38373a;
}

.pct-btn {
  position: relative;
  width: 18px;
  height: 19px;
  background-color: #636265;
}

.pct-btn::after {
  content: "";
  position: absolute;
  left: 6px;
  top: 8px;
  border: 3px solid transparent;
  border-top: 3px solid #ddd;
  border-bottom: 0;
}

.layers {
  flex: 1;
  min-height: 0;
  display: flex;
}

.layer-list { flex: 1; }

.layer {
  height: 33px;
  display: flex;
  align-items: center;
  border-bottom: 1px solid #37363a;
}

.layer.on .lname { color: #e0e0e0; }
.layer.on { background: linear-gradient(90deg, #49484b 31px, #4f6479 31px); }

.eye {
  width: 31px;
  height: 100%;
  display: flex;
  align-items: center;
  justify-content: center;
  border-right: 1px solid #37363a;
}

.thumbnail {
  width: 33px;
  height: 26px;
  margin: 0 10px 0 3px;
  border: 1px solid #000;
}

.checker {
  background: repeating-conic-gradient(#bbb 0 25%, #fff 0 50%) 0 0 / 9px 9px;
  outline: 1px solid #fff;
}

.white { background-color: #fff; }

.lname {
  font-size: 10px;
  color: #ccc;
}

.fondo { font-style: italic; }

.layer-lock {
  margin-left: auto;
  margin-right: 16px;
}

.layers-scroll {
  width: 15px;
  flex: none;
  background-color: #3e3d40;
}

.layers-foot {
  height: 15px;
  flex: none;
  display: flex;
  align-items: center;
  justify-content: flex-end;
  gap: 13px;
  padding-right: 28px;
  background-color: #4f4e51;
  border-top: 1px solid #2f2e32;
}

.layers-foot svg {
  width: 14px;
  height: 14px;
}

.fx {
  width: 14px;
  font-family: "Liberation Serif", serif;
  font-style: italic;
  font-size: 14px;
  line-height: 14px;
  color: #aaa;
}
```
